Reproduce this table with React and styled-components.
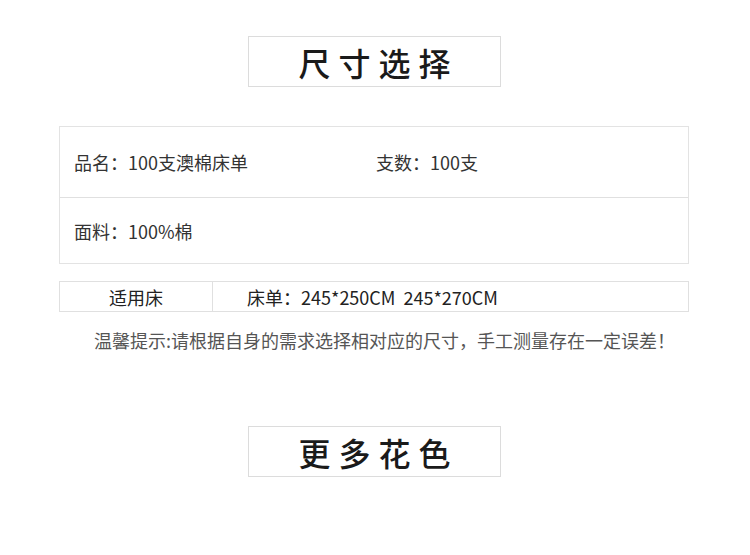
import styled, { createGlobalStyle } from "styled-components";

const GlobalStyle = createGlobalStyle`
  body {
    margin: 0;
    background: #fff;
    font-family: "Noto Sans CJK SC", "Noto Sans", sans-serif;
    color: #333;
  }
`;

const Page = styled.div`
  width: 750px;
  height: 555px;
  padding: 36px 0 0 59px;
  box-sizing: border-box;
  display: flex;
  flex-direction: column;
  align-items: flex-start;
`;

const TitleBox = styled.div`
  width: 253px;
  height: 51px;
  margin-left: 189px;
  box-sizing: border-box;
  border: 1px solid #dcdcdc;
  display: flex;
  align-items: center;
  justify-content: center;
  font-size: 32px;
  font-weight: 500;
  letter-spacing: 8px;
  padding-left: 8px;
  color: #1a1a1a;
  margin-top: ${(p) => p.$top || 0}px;
`;

const InfoTable = styled.div`
  width: 630px;
  margin-top: 39px;
  border: 1px solid #e3e3e3;
  box-sizing: border-box;
`;

const InfoRow = styled.div`
  height: ${(p) => p.$h}px;
  display: flex;
  align-items: center;
  padding-left: 14px;
  font-size: 18px;
  color: #333;
  & + & {
    border-top: 1px solid #e0e0e0;
  }
`;

const InfoCell = styled.div`
  width: ${(p) => p.$w || "auto"};
`;

const SizeRow = styled.div`
  width: 630px;
  height: 31px;
  margin-top: 17px;
  box-sizing: border-box;
  border: 1px solid #e0e0e0;
  display: flex;
  font-size: 18px;
  color: #222;
`;

const SizeLabel = styled.div`
  width: 152px;
  border-right: 1px solid #e0e0e0;
  display: flex;
  align-items: center;
  justify-content: center;
`;

const SizeValue = styled.div`
  flex: 1;
  display: flex;
  align-items: center;
  padding-left: 34px;
  word-spacing: 4px;
`;

const Note = styled.p`
  margin: 15px 0 0 35px;
  font-size: 18px;
  line-height: 26px;
  color: #555;
`;

export default function App() {
  return (
    <>
      <GlobalStyle />
      <Page>
        <TitleBox>尺寸选择</TitleBox>
        <InfoTable>
          <InfoRow $h={70}>
            <InfoCell $w="302px">品名：100支澳棉床单</InfoCell>
            <InfoCell>支数：100支</InfoCell>
          </InfoRow>
          <InfoRow $h={65}>
            <InfoCell>面料：100%棉</InfoCell>
          </InfoRow>
        </InfoTable>
        <SizeRow>
          <SizeLabel>适用床</SizeLabel>
          <SizeValue>床单：245*250CM 245*270CM</SizeValue>
        </SizeRow>
        <Note>温馨提示:请根据自身的需求选择相对应的尺寸，手工测量存在一定误差！</Note>
        <TitleBox $top={73}>更多花色</TitleBox>
      </Page>
    </>
  );
}
